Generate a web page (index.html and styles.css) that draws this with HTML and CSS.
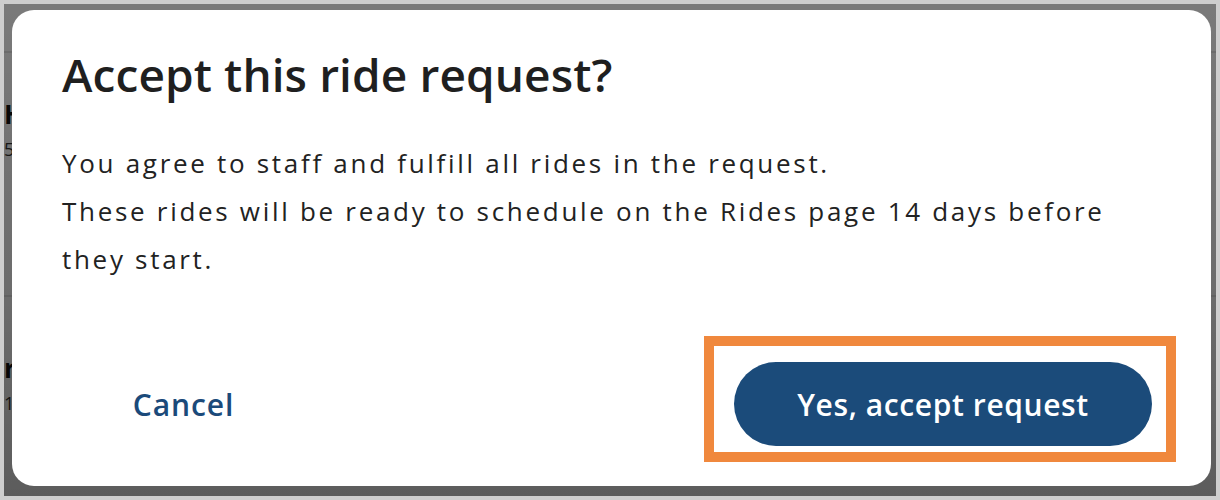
FILE: index.html
```html
<!DOCTYPE html>
<html lang="en">
<head>
<meta charset="utf-8">
<title>Accept this ride request?</title>
<link rel="stylesheet" href="styles.css">
</head>
<body>
<div class="screen">
  <div class="page">
    <div class="page-header"></div>
    <div class="page-row">
      <div class="row-title">H</div>
      <div class="row-sub">5</div>
    </div>
    <div class="page-row second">
      <div class="row-title">r</div>
      <div class="row-sub">1,</div>
    </div>
  </div>
  <div class="scrim">
    <div class="modal" role="dialog" aria-labelledby="dlg-title">
      <h1 class="modal-title" id="dlg-title">Accept this ride request?</h1>
      <div class="modal-body">
        <p>You agree to staff and fulfill all rides in the request.</p>
        <p>These rides will be ready to schedule on the Rides page 14 days before they start.</p>
      </div>
      <div class="modal-footer">
        <button class="btn-cancel" type="button">Cancel</button>
        <div class="highlight-wrap">
          <button class="btn-primary" type="button">Yes, accept request</button>
          <span class="highlight" aria-hidden="true"></span>
        </div>
      </div>
    </div>
  </div>
</div>
</body>
</html>
```

FILE: styles.css
```css
* { box-sizing: border-box; }

html, body {
  margin: 0;
  height: 500px;
}

body {
  background: #cecece;
  padding: 4px;
  font-family: "Open Sans", "Noto Sans", sans-serif;
}

.screen {
  position: relative;
  width: 1212px;
  height: 492px;
  overflow: hidden;
  background: #ffffff;
}

.page {
  display: flex;
  flex-direction: column;
}

.page-header {
  height: 49px;
  border-bottom: 2px solid #e4e4e4;
}

.page-row {
  padding-top: 46px;
  height: 244px;
  border-bottom: 2px solid #e4e4e4;
}

.page-row.second {
  padding-top: 56px;
  border-bottom: none;
}

.row-title {
  font-size: 26px;
  line-height: 30px;
  font-weight: 700;
  color: #111;
}

.row-sub {
  margin-top: 8px;
  font-size: 18px;
  color: #333;
}

.scrim {
  position: absolute;
  inset: 0;
  background: linear-gradient(180deg, rgba(0,0,0,0.52) 0%, rgba(0,0,0,0.58) 60%, rgba(0,0,0,0.64) 100%);
  display: flex;
  padding: 6px 5px 10px 8px;
}

.modal {
  flex: 1;
  background: #ffffff;
  border-radius: 22px;
  padding: 33px 59px 40px 50px;
  display: flex;
  flex-direction: column;
}

.modal-title {
  margin: 0;
  font-size: 46px;
  line-height: 62px;
  font-weight: 600;
  color: #1f1f1f;
  letter-spacing: 0.1px;
}

.modal-body {
  margin-top: 34px;
  font-size: 26px;
  line-height: 48px;
  letter-spacing: 2.7px;
  color: #222222;
}

.modal-body p {
  margin: 0;
  max-width: 1090px;
}

.modal-footer {
  margin-top: auto;
  display: flex;
  align-items: center;
  justify-content: space-between;
}

.btn-cancel {
  border: none;
  background: none;
  width: 243px;
  height: 84px;
  padding: 0;
  font-family: inherit;
  font-size: 30px;
  font-weight: 600;
  letter-spacing: 0.9px;
  color: #1b4a7a;
  cursor: pointer;
}

.highlight-wrap {
  position: relative;
}

.btn-primary {
  display: block;
  width: 418px;
  height: 84px;
  border: none;
  border-radius: 42px;
  background: #1b4b7a;
  color: #ffffff;
  font-family: inherit;
  font-size: 30px;
  font-weight: 600;
  letter-spacing: 0.6px;
  cursor: pointer;
}

.highlight {
  position: absolute;
  top: -26px;
  left: -30px;
  right: -24px;
  bottom: -16px;
  border: 10px solid #f0883d;
  pointer-events: none;
}
```
